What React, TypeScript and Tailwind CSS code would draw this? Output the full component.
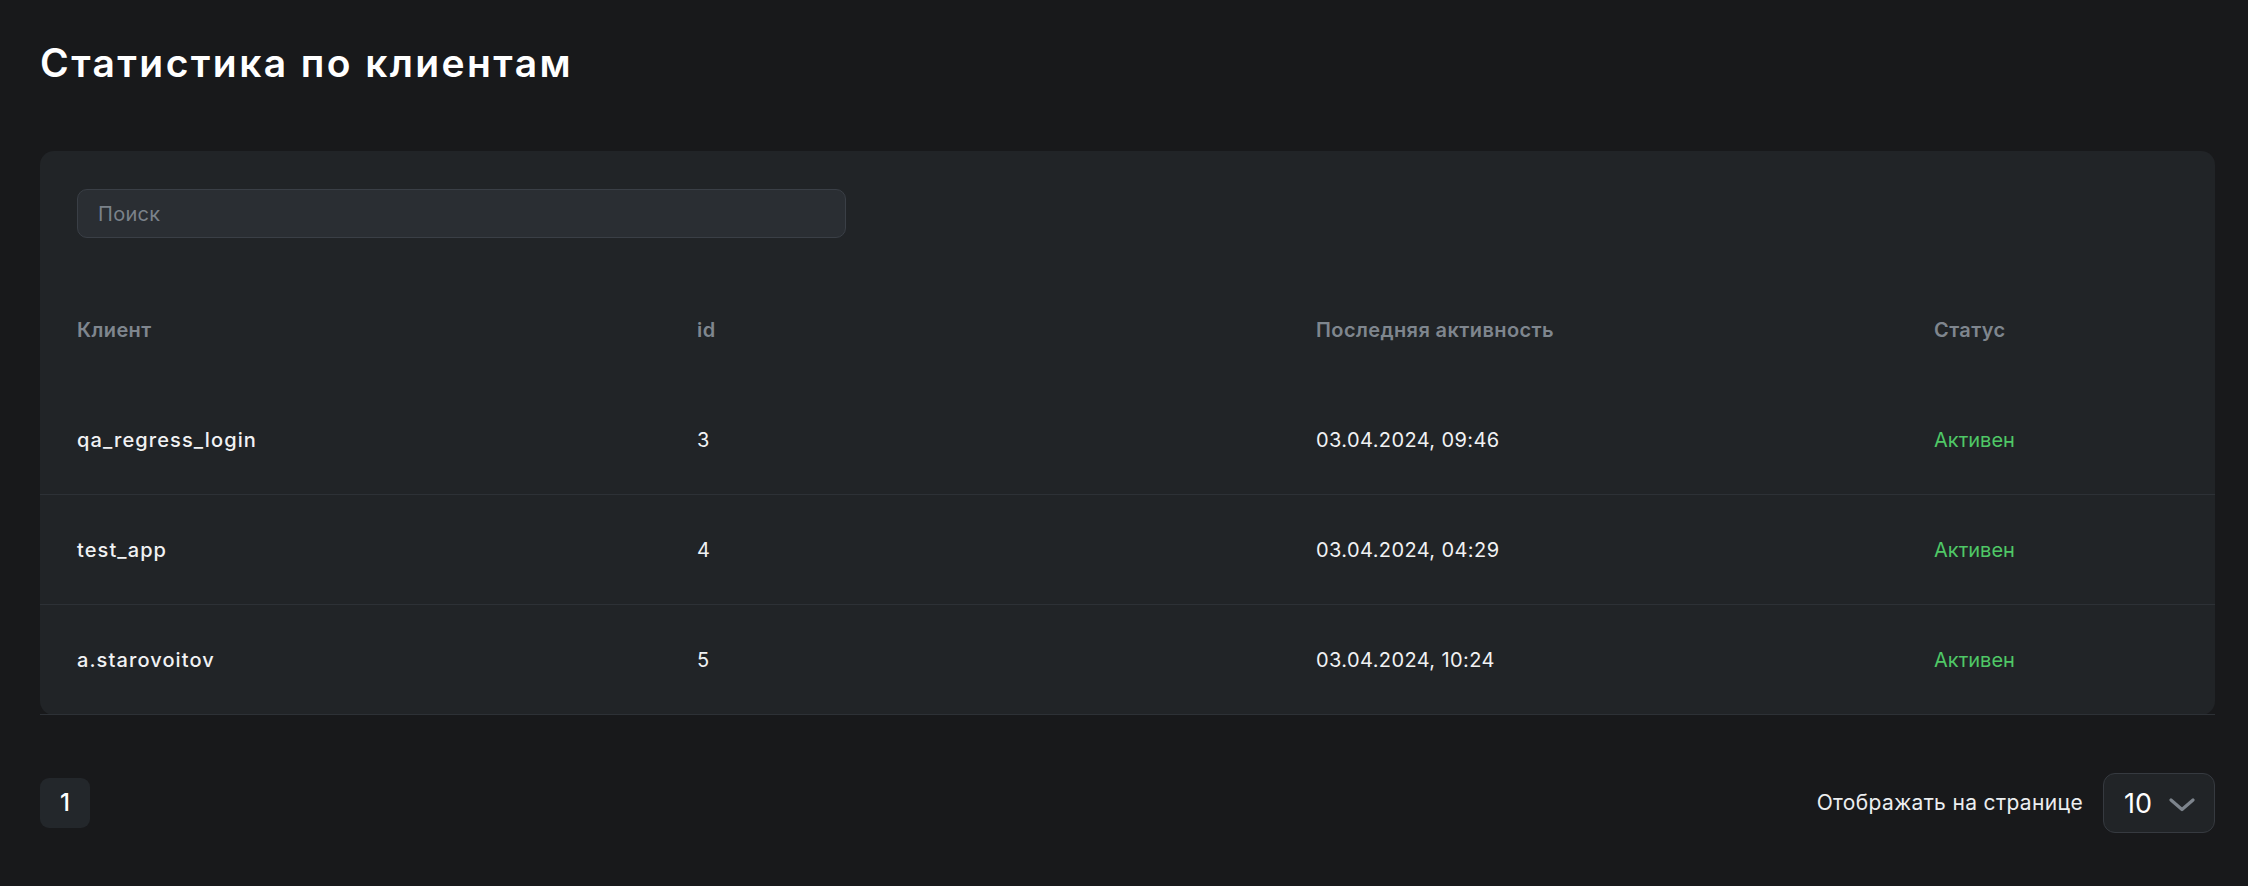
type Client = {
  name: string;
  id: number;
  lastActive: string;
  status: string;
};

const clients: Client[] = [
  { name: "qa_regress_login", id: 3, lastActive: "03.04.2024, 09:46", status: "Активен" },
  { name: "test_app", id: 4, lastActive: "03.04.2024, 04:29", status: "Активен" },
  { name: "a.starovoitov", id: 5, lastActive: "03.04.2024, 10:24", status: "Активен" },
];

const cols = "grid grid-cols-[620px_619px_618px_1fr] items-center pl-[37px]";

export default function App() {
  return (
    <div className="min-h-screen bg-[#18191b] pl-[40px] pr-[33px] pt-[40px] font-['Inter',sans-serif] antialiased">
      <h1 className="flex h-[45px] items-center text-[39px] font-semibold leading-none tracking-[2.4px] text-white">
        Статистика по клиентам
      </h1>

      <section className="mt-[66px] rounded-[14px] bg-[#212427] pt-[38px]">
        <div className="px-[37px]">
          <input
            type="text"
            placeholder="Поиск"
            className="h-[49px] w-[769px] rounded-[10px] border border-[#3a3f46] bg-[#2a2e33] px-[20px] text-[20px] tracking-[0.3px] text-white outline-none placeholder:text-[#7b828a]"
          />
        </div>

        <div className={`${cols} mt-[37px] h-[110px] text-[20px] font-semibold tracking-[0.4px] text-[#7f868e]`}>
          <span>Клиент</span>
          <span>id</span>
          <span>Последняя активность</span>
          <span>Статус</span>
        </div>

        {clients.map((c) => (
          <div
            key={c.id}
            className={`${cols} h-[110px] border-b border-[#2d3136] text-[20px] tracking-[0.4px] text-[#f1f2f4]`}
          >
            <span className="font-medium tracking-[1.1px]">{c.name}</span>
            <span>{c.id}</span>
            <span>{c.lastActive}</span>
            <span className="tracking-normal text-[#4fc866]">{c.status}</span>
          </div>
        ))}
      </section>

      <div className="mt-[58px] flex h-[60px] items-center justify-between">
        <button className="grid h-[50px] w-[50px] place-items-center rounded-[9px] bg-[#23272b] text-[24px] font-medium text-white">
          1
        </button>

        <div className="flex items-center gap-[20px]">
          <span className="text-[21px] tracking-[0.35px] text-[#eceef0]">Отображать на странице</span>
          <div className="flex h-[60px] w-[112px] items-center justify-between rounded-[12px] border border-[#363a40] bg-[#212427] pl-[20px] pr-[19px]">
            <span className="text-[27px] leading-none text-white">10</span>
            {/* chevron */}
            <svg width="26" height="14" viewBox="0 0 26 14" fill="none" className="mt-[4px]">
              <polyline
                points="2,2 13,11.5 24,2"
                stroke="#7d848c"
                strokeWidth="3.2"
                strokeLinecap="round"
                strokeLinejoin="round"
              />
            </svg>
          </div>
        </div>
      </div>
    </div>
  );
}
